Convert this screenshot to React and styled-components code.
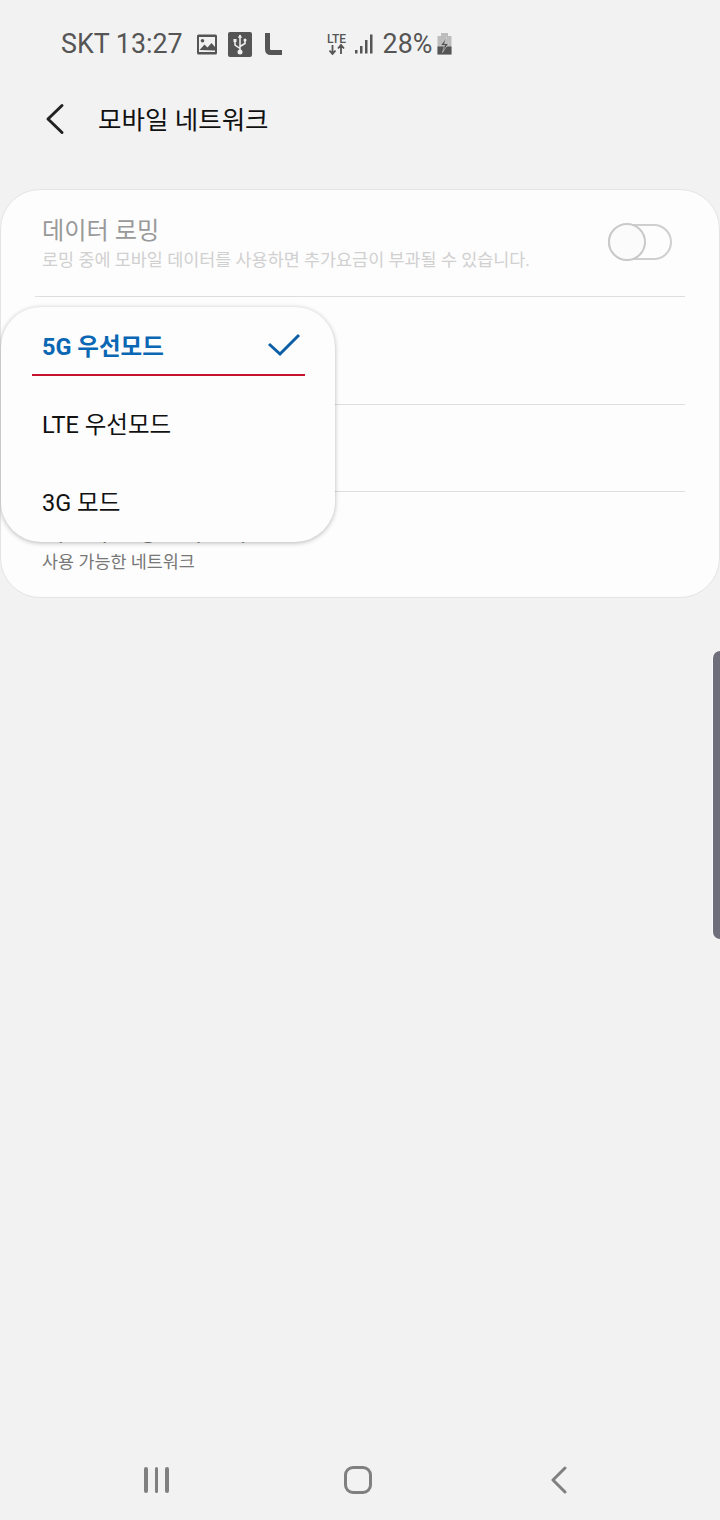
import React from "react";
import styled, { createGlobalStyle } from "styled-components";

const Global = createGlobalStyle`
  html, body { margin: 0; padding: 0; background: #f2f2f2; }
  * { box-sizing: border-box; }
  body { font-family: Roboto, "Noto Sans CJK KR", sans-serif; }
`;
const Page = styled.div`
  position: relative;
  width: 720px;
  height: 1520px;
  background: #f2f2f2;
  overflow: hidden;
  display: flex;
  flex-direction: column;
`;
const Status = styled.div`
  height: 88px;
  display: flex;
  align-items: center;
  padding-left: 61px;
  color: #555;
  font-size: 26.8px;
`;
const StatusText = styled.span`
  margin-right: ${(p) => p.$mr || 0}px;
  line-height: 1;
`;
const Glyph = styled.svg`
  flex: none;
  display: block;
  margin-right: ${(p) => p.$mr || 0}px;
`;
const Header = styled.div`
  height: 62px;
  display: flex;
  align-items: center;
  padding-left: 45px;
`;
const BackIcon = styled.svg`
  display: block;
  flex: none;
`;
const Title = styled.h1`
  margin: 0 0 4px 30px;
  font-size: 25.5px;
  font-weight: 400;
  color: #111;
`;
const Card = styled.section`
  margin-top: 39px;
  height: 409px;
  background: #fdfdfd;
  border: 1px solid #e4e4e4;
  border-radius: 40px;
  display: flex;
  flex-direction: column;
`;
const Row = styled.div`
  height: ${(p) => p.$h}px;
  margin: 0 34px;
  padding: ${(p) => p.$pt}px 7px 0;
  border-bottom: ${(p) => (p.$last ? "none" : "1px solid #dedede")};
  display: flex;
  justify-content: space-between;
  flex: none;
`;
const RowTitle = styled.div`
  font-size: 24.2px;
  line-height: 30px;
  color: ${(p) => p.$c || "#111"};
`;
const RowSub = styled.div`
  margin-top: ${(p) => p.$mt || 2}px;
  font-size: 17.43px;
  line-height: 24px;
  color: ${(p) => p.$c || "#777"};
  white-space: nowrap;
`;
const Toggle = styled.div`
  position: relative;
  width: 64px;
  height: 36px;
  margin: 8px 6px 0 0;
  border: 2.5px solid #cfcfcf;
  border-radius: 18px;
  flex: none;
`;
const Knob = styled.div`
  position: absolute;
  left: -2.5px;
  top: -3.5px;
  width: 38px;
  height: 38px;
  border-radius: 50%;
  border: 2.5px solid #c9c9c9;
  background: #fbfbfb;
`;
const Popup = styled.div`
  position: absolute;
  left: 1px;
  top: 307px;
  width: 334px;
  height: 235px;
  background: #fdfdfd;
  border-radius: 40px;
  box-shadow: 0 1px 5px rgba(0, 0, 0, 0.28);
  display: flex;
  flex-direction: column;
`;
const Option = styled.div`
  height: ${(p) => p.$h}px;
  margin: 0 30px 0 31px;
  padding: ${(p) => p.$pt}px 4px 0 10px;
  display: flex;
  align-items: center;
  justify-content: space-between;
  font-size: 23.5px;
  font-weight: ${(p) => (p.$on ? 700 : 400)};
  color: ${(p) => (p.$on ? "#0a67b4" : "#111")};
  border-bottom: ${(p) => (p.$on ? "2px solid #c4122f" : "none")};
`;
const Check = styled.svg`
  display: block;
  flex: none;
`;
const Handle = styled.div`
  position: absolute;
  right: 0;
  top: 651px;
  width: 7px;
  height: 288px;
  background: #6f6f7b;
  border-radius: 8px 0 0 8px;
  box-shadow: -1px 0 0 #fafafa;
`;
const Nav = styled.nav`
  margin-top: auto;
  height: 80px;
  padding: 26px 0 0 144px;
  display: flex;
  align-items: flex-start;
`;
const Bars = styled.div`
  display: flex;
  gap: 7px;
  margin: 1px 0 0 0;
`;
const Bar = styled.div`
  width: 3.5px;
  height: 26px;
  background: #808080;
  border-radius: 2px;
`;
const HomeIcon = styled.div`
  width: 28px;
  height: 28px;
  margin: 0 0 0 175px;
  border: 3.5px solid #808080;
  border-radius: 9px;
`;
const BackNav = styled.svg`
  margin: 0 0 0 178px;
  display: block;
`;

export default function App() {
  return (
    <Page>
      <Global />
      <Status>
        <StatusText $mr={14}>SKT 13:27</StatusText>
        <Glyph $mr={11} width="20" height="21" viewBox="0 0 20 21">
          <rect x="0" y="0.5" width="20" height="20" rx="1.500" fill="#555" />
          <rect x="2" y="3" width="16" height="15" fill="#f2f2f2" />
          <circle cx="5.500" cy="6.800" r="1.800" fill="#555" />
          <path d="M2.500 16l5-5.500 3 3 4-4.500 3.500 4v3.500z" fill="#555" />
        </Glyph>
        <Glyph $mr={13} width="24" height="25" viewBox="0 0 24 25">
          <rect width="24" height="25" rx="2" fill="#555" />
          <path d="M12 3v16M12 16.500l-5-3.500V9.500M12 14.500l5-3V8.500" stroke="#f2f2f2" strokeWidth="1.500" fill="none" />
          <path d="M12 2.500l2.200 3.200h-4.400zM5.500 7h3v3h-3z" fill="#f2f2f2" />
          <circle cx="17" cy="8" r="1.500" fill="#f2f2f2" />
          <circle cx="12" cy="20" r="2.500" fill="#f2f2f2" />
        </Glyph>
        <Glyph $mr={45} width="17" height="22" viewBox="0 0 17 22">
          <path d="M2.500 0v16q0 3.500 3.500 3.500H17" stroke="#555" strokeWidth="5" fill="none" />
        </Glyph>
        <Glyph $mr={8} width="20" height="22" viewBox="0 0 20 22">
          <text x="0" y="9.500" fontFamily="Roboto, sans-serif" fontSize="12" fontWeight="500" fill="#555">LTE</text>
          <path d="M5.500 12v9M2.500 17.500l3 3.500 3-3.500M14 21v-9M11 15.500l3-3.500 3 3.500" stroke="#555" strokeWidth="1.800" fill="none" />
        </Glyph>
        <Glyph $mr={10} width="18" height="20" viewBox="0 0 18 20">
          <rect x="0" y="16" width="2.500" height="3.500" fill="#555" />
          <rect x="5" y="12" width="2.500" height="7.500" fill="#555" />
          <rect x="10" y="6" width="2.500" height="13.500" fill="#555" />
          <rect x="15" y="0.500" width="2.500" height="19" fill="#555" />
        </Glyph>
        <StatusText $mr={5}>28%</StatusText>
        <Glyph width="15" height="22" viewBox="0 0 15 22">
          <rect x="4" y="0" width="7" height="3" fill="#bdbdbd" />
          <rect x="0.500" y="3" width="14" height="18.500" fill="#bdbdbd" />
          <rect x="0.500" y="13.500" width="14" height="8" fill="#555" />
          <path d="M9.500 4.500L3.500 12.500H7.500L5.500 19.500l6-9H7.500z" fill="#555" stroke="#e8e8e8" strokeWidth="0.500" />
        </Glyph>
      </Status>
      <Header>
        <BackIcon width="23" height="32" viewBox="0 0 23 32">
          <path d="M17 2.500L3 16l14 13.500" stroke="#222" strokeWidth="3" fill="none" strokeLinecap="round" strokeLinejoin="round" />
        </BackIcon>
        <Title>모바일 네트워크</Title>
      </Header>
      <Card>
        <Row $h={107} $pt={26}>
          <div>
            <RowTitle $c="#999">데이터 로밍</RowTitle>
            <RowSub $c="#d0d0d0">로밍 중에 모바일 데이터를 사용하면 추가요금이 부과될 수 있습니다.</RowSub>
          </div>
          <Toggle><Knob /></Toggle>
        </Row>
        <Row $h={108} $pt={26}>
          <div>
            <RowTitle>네트워크 모드</RowTitle>
            <RowSub>5G 우선모드</RowSub>
          </div>
        </Row>
        <Row $h={87} $pt={26}>
          <RowTitle>액세스 포인트</RowTitle>
        </Row>
        <Row $h={105} $pt={25} $last>
          <div>
            <RowTitle>네트워크 통신사업자</RowTitle>
            <RowSub $mt={3}>사용 가능한 네트워크</RowSub>
          </div>
        </Row>
      </Card>
      <Popup>
        <Option $h={69} $pt={8} $on>
          5G 우선모드
          <Check width="34" height="24" viewBox="0 0 34 24">
            <path d="M2 11l11 10L32 2" stroke="#0a5fa6" strokeWidth="3" fill="none" />
          </Check>
        </Option>
        <Option $h={81} $pt={12}>LTE 우선모드</Option>
        <Option $h={75} $pt={12}>3G 모드</Option>
      </Popup>
      <Handle />
      <Nav>
        <Bars><Bar /><Bar /><Bar /></Bars>
        <HomeIcon />
        <BackNav width="18" height="28" viewBox="0 0 18 28">
          <path d="M15 2L3 14l12 12" stroke="#808080" strokeWidth="3" fill="none" strokeLinecap="round" strokeLinejoin="round" />
        </BackNav>
      </Nav>
    </Page>
  );
}
